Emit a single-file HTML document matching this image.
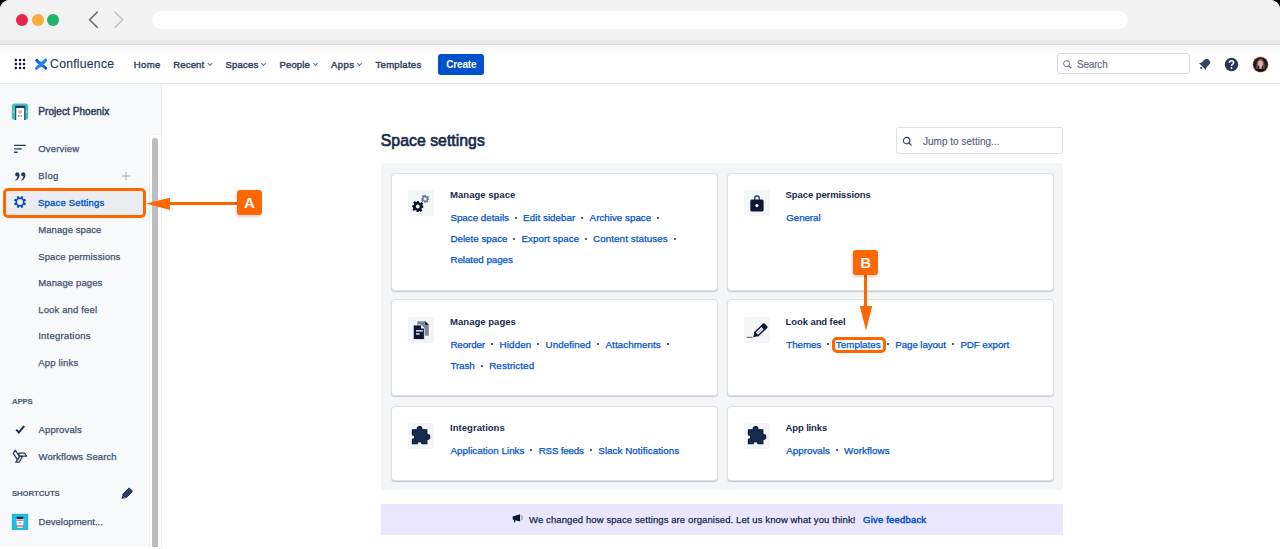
<!DOCTYPE html>
<html><head><meta charset="utf-8">
<style>
*{box-sizing:border-box;margin:0;padding:0}
html,body{width:1280px;height:549px;overflow:hidden;background:#000}
body{font-family:"Liberation Sans",sans-serif;color:#172b4d;position:relative}
.a{position:absolute;white-space:nowrap}
.tx{-webkit-text-stroke:0.25px currentColor}
#frame{position:absolute;left:0;top:0;width:1280px;height:549px;background:#fff;border-radius:9.5px 9.5px 0 0;overflow:hidden}
#chrome{position:absolute;left:0;top:0;width:1280px;height:40px;background:#f2f2f2}
.tl{position:absolute;top:14px;width:12px;height:12px;border-radius:50%}
#url{position:absolute;left:152px;top:11px;width:976px;height:18px;background:#fff;border-radius:9px}
#nav{position:absolute;left:0;top:45px;width:1280px;height:39px;background:#fff;border-bottom:1px solid #e4e6ea}
.nv{position:absolute;top:58px;font-size:10px;font-weight:700;color:#344563;line-height:12px}
#side{position:absolute;left:0;top:84px;width:162px;height:462.5px;background:#f8f9fb;border-right:1.2px solid #ebebeb}
.si{position:absolute;left:39px;font-size:10px;color:#344563;line-height:12px}
.cap{position:absolute;left:12px;font-size:7.5px;font-weight:700;color:#5e6c84;letter-spacing:.3px;line-height:10px}
#main{position:absolute;left:162px;top:84px;width:1118px;height:465px;background:#fff}
.card{position:absolute;background:#fff;border:1px solid #dfe1e6;border-radius:4px;box-shadow:0 1px 1px rgba(9,30,66,.2)}
.ib{position:absolute;width:27px;height:27px;background:#f4f5f7;border-radius:2px}
.ct{position:absolute;font-size:9.5px;font-weight:700;color:#172b4d;line-height:12px}
.lk{position:absolute;font-size:10px;color:#0052cc;line-height:12px}
.dot{position:absolute;width:2.2px;height:2.2px;background:#172b4d;border-radius:50%}
.or{background:#ff6600}
</style></head><body>
<div id="frame">
  <div id="chrome">
    <div class="tl" style="left:16px;background:#e8264a"></div>
    <div class="tl" style="left:32px;background:#f9ac3a"></div>
    <div class="tl" style="left:47px;background:#22b36b"></div>
    <svg class="a" style="left:80px;top:6px" width="50" height="28" viewBox="0 0 50 28">
      <path d="M17.3 6.1 L9.6 13.8 L17.3 21.4" fill="none" stroke="#707070" stroke-width="1.6" stroke-linecap="round"/>
      <path d="M35 6.1 L42.6 13.8 L35 21.4" fill="none" stroke="#c6c6c6" stroke-width="1.6" stroke-linecap="round"/>
    </svg>
    <div id="url"></div>
  </div>
  <div class="a" style="left:0;top:40px;width:1280px;height:4px;background:#eaeaea"></div>
  <div class="a" style="left:0;top:43.5px;width:1280px;height:2px;background:#dcdcdc"></div>
  <div id="nav"></div>
  <div class="a" style="left:0;top:45.5px;width:1280px;height:8px;background:linear-gradient(#f6f6f6,#fff)"></div>

<!-- grid -->
<svg class="a" style="left:13px;top:57px" width="14" height="14" viewBox="0 0 14 14">
  <g fill="#0b1636" transform="translate(0.15 0.15)">
  <rect x="1.5" y="1.6" width="2.4" height="2.4" rx="1"/><rect x="5.7" y="1.6" width="2.4" height="2.4" rx="1"/><rect x="9.7" y="1.6" width="2.4" height="2.4" rx="1"/>
  <rect x="1.5" y="5.6" width="2.4" height="2.4" rx="1"/><rect x="5.7" y="5.6" width="2.4" height="2.4" rx="1"/><rect x="9.7" y="5.6" width="2.4" height="2.4" rx="1"/>
  <rect x="1.5" y="9.6" width="2.4" height="2.4" rx="1"/><rect x="5.7" y="9.6" width="2.4" height="2.4" rx="1"/><rect x="9.7" y="9.6" width="2.4" height="2.4" rx="1"/>
  </g>
</svg>
<!-- confluence logo -->
<svg class="a" style="left:34px;top:57px" width="14" height="14" viewBox="0 0 14 14">
  <defs><linearGradient id="cg" x1="0" y1="0" x2="1" y2="1"><stop offset="0" stop-color="#0052cc"/><stop offset=".5" stop-color="#2684ff"/><stop offset="1" stop-color="#0052cc"/></linearGradient></defs>
  <path d="M2.7 3.4 Q7 9.4 11.6 3 M2.5 11.4 Q7 5.2 11.6 11.2" fill="none" stroke="url(#cg)" stroke-width="3" stroke-linecap="round"/>
</svg>
<!-- chevrons -->
<svg class="a" style="left:0;top:0" width="370" height="80">
  <g fill="none" stroke="#6b778c" stroke-width="1.05">
  <path d="M207.8 63.2 L210 65.4 L212.2 63.2"/>
  <path d="M261.3 63.2 L263.5 65.4 L265.7 63.2"/>
  <path d="M313.3 63.2 L315.5 65.4 L317.7 63.2"/>
  <path d="M357.3 63.2 L359.5 65.4 L361.7 63.2"/>
  </g>
</svg>
<!-- create button -->
<div class="a" style="left:438.3px;top:53.5px;width:45.6px;height:21px;background:#0052cc;border-radius:3px"></div>
<!-- search box -->
<div class="a" style="left:1056.5px;top:53.4px;width:133.2px;height:21px;border:1.3px solid #d8dbe1;border-radius:3px;background:#fff"></div>
<svg class="a" style="left:1061px;top:58px" width="12" height="12" viewBox="0 0 12 12">
  <circle cx="5.6" cy="5.6" r="3" fill="none" stroke="#5e6c84" stroke-width="1"/>
  <path d="M7.8 7.8 L10 10" stroke="#5e6c84" stroke-width="1.1" stroke-linecap="round"/>
</svg>
<!-- bell -->
<svg class="a" style="left:1198px;top:57px" width="14" height="14" viewBox="0 0 14 14">
  <g transform="rotate(45 7 7)">
  <path d="M2 10.6 Q3.6 9.4 3.6 7.2 V5.2 Q3.6 1.2 7 1.2 Q10.4 1.2 10.4 5.2 V7.2 Q10.4 9.4 12 10.6 Z" fill="#344563"/>
  <circle cx="7" cy="12.4" r="1.1" fill="#344563"/>
  </g>
</svg>
<!-- help -->
<svg class="a" style="left:1224px;top:56.5px" width="15" height="15" viewBox="0 0 15 15">
  <circle cx="7.5" cy="7.5" r="6.7" fill="#253858"/>
  <path d="M5.4 5.8 Q5.4 3.7 7.5 3.7 Q9.6 3.7 9.6 5.6 Q9.6 6.8 8.4 7.4 Q7.5 7.9 7.5 9" fill="none" stroke="#fff" stroke-width="1.5"/>
  <circle cx="7.5" cy="11" r=".9" fill="#fff"/>
</svg>
<!-- avatar -->
<svg class="a" style="left:1251.5px;top:55.5px" width="17" height="17" viewBox="0 0 17 17">
  <defs><clipPath id="av"><circle cx="8.5" cy="8.5" r="7.3"/></clipPath></defs>
  <circle cx="8.5" cy="8.5" r="8" fill="#ef8a4c"/>
  <circle cx="8.5" cy="8.5" r="7.3" fill="#141c30"/>
  <g clip-path="url(#av)">
    <path d="M4.2 14 Q3.8 3.2 8.5 2.8 Q13.2 3.2 12.8 14 L11.4 14 L11 8.5 L6 8.5 L5.6 14 Z" fill="#7a5646"/>
    <ellipse cx="8.5" cy="7.8" rx="2.4" ry="3.3" fill="#e4b09c"/>
    <rect x="7.4" y="10.4" width="2.2" height="2.6" fill="#e4b09c"/>
    <rect x="2" y="13" width="13" height="4" fill="#0d1220"/>
  </g>
</svg>


<div id="side"></div>
<!-- space icon -->
<svg class="a" style="left:11px;top:102px" width="19" height="19" viewBox="0 0 19 19">
  <rect x="0.8" y="1.4" width="16.4" height="16.6" rx="3.2" fill="#3fbfb8"/>
  <path d="M4.7 18 V4.8 Q4.7 4.2 5.3 4.2 H13.2 Q13.8 4.2 13.8 4.8 V18" fill="#fff" stroke="#1f2f63" stroke-width="1.1"/>
  <rect x="4.7" y="4.2" width="9.1" height="1.8" fill="#1f2f63"/>
  <circle cx="9.2" cy="9.9" r="1.9" fill="#f4a0a0"/>
  <circle cx="7.8" cy="13.9" r="0.8" fill="#ff2020"/>
  <circle cx="10.4" cy="13.9" r="0.8" fill="#23b5b0"/>
  <path d="M2.8 8.5 Q2.2 9.5 2.8 10.6 M15.2 8.5 Q15.8 9.5 15.2 10.6" stroke="#d9f3f1" stroke-width="0.8" fill="none"/>
</svg>
<!-- overview icon -->
<svg class="a" style="left:13px;top:144px" width="14" height="10" viewBox="0 0 14 10">
  <rect x="0.9" y="0.8" width="12" height="1.3" rx=".6" fill="#253858"/>
  <rect x="0.9" y="4.3" width="8.1" height="1.3" rx=".6" fill="#253858"/>
  <rect x="0.9" y="7.6" width="3.9" height="1.3" rx=".6" fill="#253858"/>
</svg>
<!-- blog 99 -->
<svg class="a" style="left:14px;top:171px" width="13" height="11" viewBox="0 0 13 11">
  <circle cx="3.3" cy="3.4" r="2.1" fill="#253858"/>
  <path d="M5.5 3.4 Q5.9 7.6 1.6 9.8 L1.2 9.2 Q3.6 7.4 3.6 5.2 Z" fill="#253858"/>
  <circle cx="9.2" cy="3.4" r="2.1" fill="#253858"/>
  <path d="M11.4 3.4 Q11.8 7.6 7.5 9.8 L7.1 9.2 Q9.5 7.4 9.5 5.2 Z" fill="#253858"/>
</svg>
<!-- plus -->
<svg class="a" style="left:121px;top:171px" width="10" height="10" viewBox="0 0 10 10">
  <path d="M5 0.9 V9.1 M0.9 5 H9.1" stroke="#a5adba" stroke-width="1"/>
</svg>
<!-- scrollbar -->
<div class="a" style="left:149px;top:134px;width:12px;height:412.5px;background:#fff;border-left:1.6px solid #ececec;border-top:1px solid #f2f2f2"></div>
<div class="a" style="left:152px;top:137.5px;width:5.8px;height:409px;background:#bdbdbd;border-radius:2.9px 2.9px 0 0"></div>
<!-- highlight box -->
<div class="a" style="left:3px;top:188px;width:143px;height:30px;border:3px solid #ff6600;border-radius:5px;background:#ebecf0"></div>
<!-- gear -->
<svg class="a" style="left:13px;top:195px" width="14" height="14" viewBox="0 0 14 14">
  <path d="M7.68 2.45 L8.40 0.96 L10.28 1.74 L9.73 3.30 L10.70 4.27 L12.26 3.72 L13.04 5.60 L11.55 6.32 L11.55 7.68 L13.04 8.40 L12.26 10.28 L10.70 9.73 L9.73 10.70 L10.28 12.26 L8.40 13.04 L7.68 11.55 L6.32 11.55 L5.60 13.04 L3.72 12.26 L4.27 10.70 L3.30 9.73 L1.74 10.28 L0.96 8.40 L2.45 7.68 L2.45 6.32 L0.96 5.60 L1.74 3.72 L3.30 4.27 L4.27 3.30 L3.72 1.74 L5.60 0.96 L6.32 2.45 Z" fill="#0747c6"/>
  <circle cx="7" cy="7" r="3" fill="#ebecf0"/>
</svg>
<!-- arrow A -->
<div class="a or" style="left:168px;top:202px;width:70px;height:3px"></div>
<svg class="a" style="left:146px;top:196px" width="26" height="16" viewBox="0 0 26 16">
  <path d="M0.2 7.5 L23.9 1.8 L23.9 14 Z" fill="#ff6600"/>
</svg>
<div class="a or" style="left:237px;top:190px;width:25px;height:25px;border-radius:3px;box-shadow:-1px 2px 3px rgba(0,0,0,.18)"></div>
<div class="a" style="left:237px;top:190px;width:25px;height:25px;color:#fff;font-weight:700;font-size:15px;line-height:25px;text-align:center">A</div>
<!-- check -->
<svg class="a" style="left:14px;top:424px" width="12" height="10" viewBox="0 0 12 10">
  <path d="M2.2 5.6 L4.8 8.5 L10.2 2" fill="none" stroke="#253858" stroke-width="2"/>
</svg>
<!-- workflows -->
<svg class="a" style="left:12px;top:449px" width="16" height="15" viewBox="0 0 16 15">
  <g fill="none" stroke="#253858" stroke-width="1.2" stroke-linejoin="round">
  <path d="M3.4 1.2 L1.3 4.4 L5.6 10.8 L7.4 7.6 Z"/>
  <path d="M6.6 4.2 L12.6 4.2 L14.6 7.2 L7.6 7.2 Z"/>
  <path d="M7.6 7.4 L10.6 7.4 L7.2 13.2 L3.8 13.2 Z"/>
  </g>
</svg>
<!-- pencil shortcuts -->
<svg class="a" style="left:120px;top:487px" width="14" height="14" viewBox="0 0 14 14">
  <g transform="translate(1.6 11.8) rotate(-45)">
    <path d="M0 0 L3 -2.2 L3 2.2 Z" fill="#172b4d"/>
    <rect x="3.7" y="-2.5" width="9.4" height="5" rx="0.9" fill="#2f4066" stroke="#172b4d" stroke-width=".9"/>
  </g>
</svg>
<!-- dev icon -->
<svg class="a" style="left:11px;top:513px" width="18" height="18" viewBox="0 0 18 18">
  <rect x="0.8" y="0.8" width="16.4" height="16.2" fill="#1fbce0"/>
  <path d="M5.2 5.6 L12.8 5.6 L11.8 14.8 H6.2 Z" fill="#fff"/>
  <rect x="5.4" y="3.8" width="7.2" height="2.2" rx="1" fill="#1f2f63"/>
  <rect x="5.5" y="6.6" width="7" height="1.1" fill="#ff3030"/>
  <rect x="6" y="12.4" width="6" height="1.2" fill="#ff3030"/>
  <circle cx="9" cy="10" r="1" fill="#1fbce0"/>
</svg>


<!-- jump input -->
<div class="a" style="left:896.2px;top:127.3px;width:166.6px;height:26.7px;border:1px solid #dfe1e6;border-radius:2px;background:#fff"></div>
<svg class="a" style="left:901px;top:135px" width="12" height="12" viewBox="0 0 12 12">
  <circle cx="5.6" cy="5.6" r="3.2" fill="none" stroke="#344563" stroke-width="1.15"/>
  <path d="M7.9 7.9 L10.2 10.2" stroke="#344563" stroke-width="1.2" stroke-linecap="round"/>
</svg>
<!-- container -->
<div class="a" style="left:381px;top:162.8px;width:682px;height:327.7px;background:#f4f5f7;border-radius:3.5px"></div>
<div class="card" style="left:391px;top:172.5px;width:327px;height:118.5px"></div>
<div class="ib" style="left:408px;top:189.8px;width:26px;height:26px"></div>
<svg class="a" style="left:408px;top:189.8px" width="26" height="26" viewBox="0 0 26 26"><g transform="translate(9.8 16.5)"><path d="M-1.1 -5.6 H1.1 L1.4 -4.1 L2.6 -3.6 L3.9 -4.5 L5.4 -3 L4.5 -1.7 L5 -0.5 L5.6 -0.2 V1.1 L4.1 1.4 L3.6 2.6 L4.5 3.9 L3 5.4 L1.7 4.5 L0.5 5 L1.1 5.6 H-1.1 L-1.4 4.1 L-2.6 3.6 L-3.9 4.5 L-5.4 3 L-4.5 1.7 L-5 0.5 L-5.6 1.1 V-1.1 L-4.1 -1.4 L-3.6 -2.6 L-4.5 -3.9 L-3 -5.4 L-1.7 -4.5 L-0.5 -5 Z" fill="#0b1636"/><circle r="1.9" fill="#f4f5f7"/></g>
<g transform="translate(17.1 8.9)"><path d="M-0.8 -3.9 H0.8 L1 -2.9 L1.8 -2.5 L2.7 -3.2 L3.8 -2.1 L3.2 -1.2 L3.5 -0.4 L3.9 -0.1 V0.8 L2.9 1 L2.5 1.8 L3.2 2.7 L2.1 3.8 L1.2 3.2 L0.4 3.5 L0.8 3.9 H-0.8 L-1 2.9 L-1.8 2.5 L-2.7 3.2 L-3.8 2.1 L-3.2 1.2 L-3.5 0.4 L-3.9 0.8 V-0.8 L-2.9 -1 L-2.5 -1.8 L-3.2 -2.7 L-2.1 -3.8 L-1.2 -3.2 L-0.4 -3.5 Z" fill="#6b778c"/><circle r="1.6" fill="#f4f5f7"/></g></svg>
<div class="card" style="left:726.5px;top:172.5px;width:327px;height:118.5px"></div>
<div class="ib" style="left:743.5px;top:189.8px;width:26px;height:26px"></div>
<svg class="a" style="left:743.5px;top:189.8px" width="26" height="26" viewBox="0 0 26 26"><path d="M10.8 9.8 V8 Q10.8 5.8 13 5.8 Q15.2 5.8 15.2 8 V9.8" fill="none" stroke="#172b4d" stroke-width="1.25"/>
<rect x="6.3" y="9.5" width="13.3" height="12.1" rx="1.6" fill="#0b1636"/><circle cx="12.95" cy="15.6" r="1.6" fill="#fff"/></svg>
<div class="card" style="left:391px;top:299.2px;width:327px;height:97.3px"></div>
<div class="ib" style="left:408px;top:316.5px;width:26px;height:26px"></div>
<svg class="a" style="left:408px;top:316.5px" width="26" height="26" viewBox="0 0 26 26"><path d="M9.3 4.2 H17.2 L20.8 7.8 V18.8 H9.3 Z" fill="#7a869a"/><path d="M17.2 4.2 L20.8 7.8 H17.2 Z" fill="#0b1636"/>
<path d="M5.3 8 H13 L16.4 11.4 V22.5 H5.3 Z" fill="#0b1636" stroke="#f4f5f7" stroke-width=".8"/><path d="M13 8 L16.4 11.4 H13 Z" fill="#fff"/>
<rect x="8" y="13.2" width="6.9" height="1.3" fill="#fff"/><rect x="8" y="16.3" width="3.6" height="1.3" fill="#fff"/></svg>
<div class="card" style="left:726.5px;top:299.2px;width:327px;height:97.3px"></div>
<div class="ib" style="left:743.5px;top:316.5px;width:26px;height:26px"></div>
<svg class="a" style="left:743.5px;top:316.5px" width="26" height="26" viewBox="0 0 26 26"><path d="M2.7 20.4 H8.6" stroke="#6b778c" stroke-width="1.2"/>
<g transform="translate(9.2 20.2) rotate(-44)">
<path d="M0 0 L4.8 -3 L4.8 3 Z" fill="#0b1636"/>
<rect x="4.4" y="-2.3" width="9.4" height="4.6" fill="#fff" stroke="#0b1636" stroke-width="1.5"/>
<path d="M5.6 0 H13" stroke="#8993a4" stroke-width=".9"/>
<rect x="13.2" y="-3.1" width="4.4" height="6.2" rx="1.2" fill="#0b1636"/>
</g></svg>
<div class="card" style="left:391px;top:405.8px;width:327px;height:75.2px"></div>
<div class="ib" style="left:408px;top:423.1px;width:26px;height:26px"></div>
<svg class="a" style="left:408px;top:423.1px" width="26" height="26" viewBox="0 0 26 26"><path d="M4.4 6.7 H9.3 Q8.8 3.6 11.6 3.6 Q14.4 3.6 13.9 6.7 H18.9 V11.6 Q21.8 11.2 21.8 13.9 Q21.8 16.6 18.9 16.2 V20.7 H13.9 Q14.2 18.6 11.6 18.6 Q9 18.6 9.3 20.7 H4.4 V16.2 Q6.6 16.4 6.6 14.1 Q6.6 11.8 4.4 12 Z" fill="#172b4d" stroke="#0b1636" stroke-width="1.1" stroke-linejoin="round"/></svg>
<div class="card" style="left:726.5px;top:405.8px;width:327px;height:75.2px"></div>
<div class="ib" style="left:743.5px;top:423.1px;width:26px;height:26px"></div>
<svg class="a" style="left:743.5px;top:423.1px" width="26" height="26" viewBox="0 0 26 26"><path d="M4.4 6.7 H9.3 Q8.8 3.6 11.6 3.6 Q14.4 3.6 13.9 6.7 H18.9 V11.6 Q21.8 11.2 21.8 13.9 Q21.8 16.6 18.9 16.2 V20.7 H13.9 Q14.2 18.6 11.6 18.6 Q9 18.6 9.3 20.7 H4.4 V16.2 Q6.6 16.4 6.6 14.1 Q6.6 11.8 4.4 12 Z" fill="#172b4d" stroke="#0b1636" stroke-width="1.1" stroke-linejoin="round"/></svg>
<div class="dot" style="left:514.7px;top:216.5px"></div>
<div class="dot" style="left:580.8px;top:216.5px"></div>
<div class="dot" style="left:656.6px;top:216.5px"></div>
<div class="dot" style="left:513.0px;top:237.9px"></div>
<div class="dot" style="left:585.0px;top:237.9px"></div>
<div class="dot" style="left:673.6px;top:237.9px"></div>
<div class="dot" style="left:490.8px;top:343.2px"></div>
<div class="dot" style="left:537.2px;top:343.2px"></div>
<div class="dot" style="left:596.8px;top:343.2px"></div>
<div class="dot" style="left:666.7px;top:343.2px"></div>
<div class="dot" style="left:480.8px;top:364.6px"></div>
<div class="dot" style="left:827.0px;top:343.2px"></div>
<div class="dot" style="left:886.9px;top:343.2px"></div>
<div class="dot" style="left:951.6px;top:343.2px"></div>
<div class="dot" style="left:530.0px;top:449.0px"></div>
<div class="dot" style="left:589.5px;top:449.0px"></div>
<div class="dot" style="left:835.6px;top:449.0px"></div>
<!-- banner -->
<div class="a" style="left:380.8px;top:503.7px;width:682.2px;height:31.5px;background:#eae6ff"></div>
<svg class="a" style="left:510px;top:512px" width="16" height="12" viewBox="0 0 16 12">
  <path d="M2.7 4.4 L10.1 2.3 V9.4 L2.7 7.6 Z" fill="#0b1636"/>
  <path d="M3.9 7.7 L5.7 8.1 L5.1 10.5 L4.2 10.5 Z" fill="#0b1636"/>
  <path d="M11.7 3.6 Q12.7 5.8 11.7 8.2" stroke="#8993a4" stroke-width="1" fill="none"/>
</svg>
<!-- marker B -->
<div class="a or" style="left:864.1px;top:274px;width:3px;height:34px"></div>
<svg class="a" style="left:858px;top:305px" width="16" height="27" viewBox="0 0 16 27">
  <path d="M1.8 1 H14.2 L8 25.6 Z" fill="#ff6600"/>
</svg>
<div class="a or" style="left:853.3px;top:250.2px;width:24.6px;height:24.6px;border-radius:3px;box-shadow:-1px 2px 3px rgba(0,0,0,.18)"></div>
<div class="a" style="left:853.3px;top:250.2px;width:24.6px;height:24.6px;color:#fff;font-weight:700;font-size:15px;line-height:25px;text-align:center">B</div>
<!-- templates highlight -->
<div class="a" style="left:832px;top:336.8px;width:53.8px;height:15.9px;border:3.1px solid #ff6600;border-radius:5px"></div>

<div class="a" style="-webkit-text-stroke:0.15px currentColor;left:50.09px;top:58.22px;font-size:12.2px;line-height:12.2px;font-weight:400;color:#253858;letter-spacing:0.255px;">Confluence</div>
<div class="a" style="-webkit-text-stroke:0.45px currentColor;left:133.72px;top:60.21px;font-size:9.5px;line-height:9.5px;font-weight:400;color:#344563;letter-spacing:0.402px;">Home</div>
<div class="a" style="-webkit-text-stroke:0.45px currentColor;left:173.33px;top:60.21px;font-size:9.5px;line-height:9.5px;font-weight:400;color:#344563;letter-spacing:0.140px;">Recent</div>
<div class="a" style="-webkit-text-stroke:0.45px currentColor;left:225.53px;top:60.21px;font-size:9.5px;line-height:9.5px;font-weight:400;color:#344563;letter-spacing:0.210px;">Spaces</div>
<div class="a" style="-webkit-text-stroke:0.45px currentColor;left:279.52px;top:60.21px;font-size:9.5px;line-height:9.5px;font-weight:400;color:#344563;letter-spacing:0.143px;">People</div>
<div class="a" style="-webkit-text-stroke:0.45px currentColor;left:330.92px;top:60.21px;font-size:9.5px;line-height:9.5px;font-weight:400;color:#344563;letter-spacing:0.448px;">Apps</div>
<div class="a" style="-webkit-text-stroke:0.45px currentColor;left:375.52px;top:60.21px;font-size:9.5px;line-height:9.5px;font-weight:400;color:#344563;letter-spacing:0.293px;">Templates</div>
<div class="a" style="left:446.30px;top:59.98px;font-size:10px;line-height:10px;font-weight:700;color:#ffffff;letter-spacing:-0.190px;">Create</div>
<div class="a" style="-webkit-text-stroke:0.15px currentColor;left:1077.00px;top:59.98px;font-size:10px;line-height:10px;font-weight:400;color:#5e6c84;letter-spacing:-0.198px;">Search</div>
<div class="a" style="-webkit-text-stroke:0.5px currentColor;left:38.30px;top:107.19px;font-size:10px;line-height:10px;font-weight:400;color:#344563;letter-spacing:0.064px;">Project Phoenix</div>
<div class="a" style="-webkit-text-stroke:0.25px currentColor;left:38.32px;top:144.01px;font-size:9.5px;line-height:9.5px;font-weight:400;color:#42526e;letter-spacing:0.170px;">Overview</div>
<div class="a" style="-webkit-text-stroke:0.25px currentColor;left:38.32px;top:171.01px;font-size:9.5px;line-height:9.5px;font-weight:400;color:#42526e;letter-spacing:0.359px;">Blog</div>
<div class="a" style="-webkit-text-stroke:0.35px currentColor;left:38.12px;top:197.71px;font-size:9.5px;line-height:9.5px;font-weight:400;color:#0052cc;letter-spacing:0.175px;">Space Settings</div>
<div class="a" style="-webkit-text-stroke:0.25px currentColor;left:38.23px;top:225.01px;font-size:9.5px;line-height:9.5px;font-weight:400;color:#42526e;letter-spacing:0.077px;">Manage space</div>
<div class="a" style="-webkit-text-stroke:0.25px currentColor;left:38.23px;top:251.56px;font-size:9.5px;line-height:9.5px;font-weight:400;color:#42526e;letter-spacing:0.117px;">Space permissions</div>
<div class="a" style="-webkit-text-stroke:0.25px currentColor;left:38.23px;top:278.11px;font-size:9.5px;line-height:9.5px;font-weight:400;color:#42526e;letter-spacing:0.116px;">Manage pages</div>
<div class="a" style="-webkit-text-stroke:0.25px currentColor;left:38.23px;top:304.66px;font-size:9.5px;line-height:9.5px;font-weight:400;color:#42526e;letter-spacing:0.146px;">Look and feel</div>
<div class="a" style="-webkit-text-stroke:0.25px currentColor;left:38.23px;top:331.21px;font-size:9.5px;line-height:9.5px;font-weight:400;color:#42526e;letter-spacing:0.233px;">Integrations</div>
<div class="a" style="-webkit-text-stroke:0.25px currentColor;left:38.23px;top:357.76px;font-size:9.5px;line-height:9.5px;font-weight:400;color:#42526e;letter-spacing:0.188px;">App links</div>
<div class="a" style="-webkit-text-stroke:0.1px currentColor;left:11.91px;top:397.65px;font-size:7.8px;line-height:7.8px;font-weight:700;color:#505f79;letter-spacing:-0.114px;">APPS</div>
<div class="a" style="-webkit-text-stroke:0.25px currentColor;left:38.52px;top:425.41px;font-size:9.5px;line-height:9.5px;font-weight:400;color:#42526e;letter-spacing:0.133px;">Approvals</div>
<div class="a" style="-webkit-text-stroke:0.25px currentColor;left:38.52px;top:452.41px;font-size:9.5px;line-height:9.5px;font-weight:400;color:#42526e;letter-spacing:0.116px;">Workflows Search</div>
<div class="a" style="-webkit-text-stroke:0.1px currentColor;left:11.91px;top:490.45px;font-size:7.8px;line-height:7.8px;font-weight:700;color:#505f79;letter-spacing:-0.082px;">SHORTCUTS</div>
<div class="a" style="-webkit-text-stroke:0.25px currentColor;left:38.52px;top:517.41px;font-size:9.5px;line-height:9.5px;font-weight:400;color:#42526e;letter-spacing:0.039px;">Development...</div>
<div class="a" style="-webkit-text-stroke:0.65px currentColor;left:380.81px;top:132.68px;font-size:15.8px;line-height:15.8px;font-weight:400;color:#172b4d;letter-spacing:0.032px;">Space settings</div>
<div class="a" style="-webkit-text-stroke:0.12px currentColor;left:923.00px;top:136.98px;font-size:10px;line-height:10px;font-weight:400;color:#505f79;letter-spacing:0.019px;">Jump to setting...</div>
<div class="a" style="left:450.12px;top:189.71px;font-size:9.5px;line-height:9.5px;font-weight:700;color:#172b4d;letter-spacing:0.016px;">Manage space</div>
<div class="a" style="-webkit-text-stroke:0.25px currentColor;left:450.41px;top:212.65px;font-size:9.8px;line-height:9.8px;font-weight:400;color:#0052cc;letter-spacing:-0.019px;">Space details</div>
<div class="a" style="-webkit-text-stroke:0.25px currentColor;left:523.11px;top:212.65px;font-size:9.8px;line-height:9.8px;font-weight:400;color:#0052cc;letter-spacing:0.044px;">Edit sidebar</div>
<div class="a" style="-webkit-text-stroke:0.25px currentColor;left:589.61px;top:212.65px;font-size:9.8px;line-height:9.8px;font-weight:400;color:#0052cc;letter-spacing:0.003px;">Archive space</div>
<div class="a" style="-webkit-text-stroke:0.25px currentColor;left:450.41px;top:233.80px;font-size:9.8px;line-height:9.8px;font-weight:400;color:#0052cc;letter-spacing:-0.009px;">Delete space</div>
<div class="a" style="-webkit-text-stroke:0.25px currentColor;left:521.41px;top:233.80px;font-size:9.8px;line-height:9.8px;font-weight:400;color:#0052cc;letter-spacing:0.049px;">Export space</div>
<div class="a" style="-webkit-text-stroke:0.25px currentColor;left:593.11px;top:233.80px;font-size:9.8px;line-height:9.8px;font-weight:400;color:#0052cc;letter-spacing:0.072px;">Content statuses</div>
<div class="a" style="-webkit-text-stroke:0.25px currentColor;left:450.41px;top:254.95px;font-size:9.8px;line-height:9.8px;font-weight:400;color:#0052cc;letter-spacing:-0.062px;">Related pages</div>
<div class="a" style="left:785.62px;top:189.71px;font-size:9.5px;line-height:9.5px;font-weight:700;color:#172b4d;letter-spacing:-0.092px;">Space permissions</div>
<div class="a" style="-webkit-text-stroke:0.25px currentColor;left:786.31px;top:212.65px;font-size:9.8px;line-height:9.8px;font-weight:400;color:#0052cc;letter-spacing:-0.097px;">General</div>
<div class="a" style="left:450.12px;top:316.71px;font-size:9.5px;line-height:9.5px;font-weight:700;color:#172b4d;letter-spacing:0.023px;">Manage pages</div>
<div class="a" style="-webkit-text-stroke:0.25px currentColor;left:450.41px;top:339.65px;font-size:9.8px;line-height:9.8px;font-weight:400;color:#0052cc;letter-spacing:-0.118px;">Reorder</div>
<div class="a" style="-webkit-text-stroke:0.25px currentColor;left:499.61px;top:339.65px;font-size:9.8px;line-height:9.8px;font-weight:400;color:#0052cc;letter-spacing:0.122px;">Hidden</div>
<div class="a" style="-webkit-text-stroke:0.25px currentColor;left:545.61px;top:339.65px;font-size:9.8px;line-height:9.8px;font-weight:400;color:#0052cc;letter-spacing:0.068px;">Undefined</div>
<div class="a" style="-webkit-text-stroke:0.25px currentColor;left:605.51px;top:339.65px;font-size:9.8px;line-height:9.8px;font-weight:400;color:#0052cc;letter-spacing:0.075px;">Attachments</div>
<div class="a" style="-webkit-text-stroke:0.25px currentColor;left:450.41px;top:360.80px;font-size:9.8px;line-height:9.8px;font-weight:400;color:#0052cc;letter-spacing:-0.102px;">Trash</div>
<div class="a" style="-webkit-text-stroke:0.25px currentColor;left:489.21px;top:360.80px;font-size:9.8px;line-height:9.8px;font-weight:400;color:#0052cc;letter-spacing:0.087px;">Restricted</div>
<div class="a" style="left:785.62px;top:316.71px;font-size:9.5px;line-height:9.5px;font-weight:700;color:#172b4d;letter-spacing:-0.099px;">Look and feel</div>
<div class="a" style="-webkit-text-stroke:0.25px currentColor;left:786.31px;top:339.65px;font-size:9.8px;line-height:9.8px;font-weight:400;color:#0052cc;letter-spacing:-0.085px;">Themes</div>
<div class="a" style="-webkit-text-stroke:0.25px currentColor;left:835.81px;top:339.65px;font-size:9.8px;line-height:9.8px;font-weight:400;color:#0052cc;letter-spacing:0.036px;">Templates</div>
<div class="a" style="-webkit-text-stroke:0.25px currentColor;left:895.31px;top:339.65px;font-size:9.8px;line-height:9.8px;font-weight:400;color:#0052cc;letter-spacing:-0.115px;">Page layout</div>
<div class="a" style="-webkit-text-stroke:0.25px currentColor;left:960.41px;top:339.65px;font-size:9.8px;line-height:9.8px;font-weight:400;color:#0052cc;letter-spacing:-0.087px;">PDF export</div>
<div class="a" style="left:450.12px;top:422.71px;font-size:9.5px;line-height:9.5px;font-weight:700;color:#172b4d;letter-spacing:0.023px;">Integrations</div>
<div class="a" style="-webkit-text-stroke:0.25px currentColor;left:450.41px;top:445.65px;font-size:9.8px;line-height:9.8px;font-weight:400;color:#0052cc;letter-spacing:0.032px;">Application Links</div>
<div class="a" style="-webkit-text-stroke:0.25px currentColor;left:538.71px;top:445.65px;font-size:9.8px;line-height:9.8px;font-weight:400;color:#0052cc;letter-spacing:-0.207px;">RSS feeds</div>
<div class="a" style="-webkit-text-stroke:0.25px currentColor;left:598.31px;top:445.65px;font-size:9.8px;line-height:9.8px;font-weight:400;color:#0052cc;letter-spacing:0.044px;">Slack Notifications</div>
<div class="a" style="left:785.62px;top:422.71px;font-size:9.5px;line-height:9.5px;font-weight:700;color:#172b4d;letter-spacing:-0.146px;">App links</div>
<div class="a" style="-webkit-text-stroke:0.25px currentColor;left:786.31px;top:445.65px;font-size:9.8px;line-height:9.8px;font-weight:400;color:#0052cc;letter-spacing:-0.011px;">Approvals</div>
<div class="a" style="-webkit-text-stroke:0.25px currentColor;left:844.11px;top:445.65px;font-size:9.8px;line-height:9.8px;font-weight:400;color:#0052cc;letter-spacing:0.064px;">Workflows</div>
<div class="a" style="-webkit-text-stroke:0.25px currentColor;left:529.02px;top:515.01px;font-size:9.5px;line-height:9.5px;font-weight:400;color:#172b4d;letter-spacing:0.099px;">We changed how space settings are organised. Let us know what you think!</div>
<div class="a" style="-webkit-text-stroke:0.45px currentColor;left:863.12px;top:515.01px;font-size:9.5px;line-height:9.5px;font-weight:400;color:#0052cc;letter-spacing:0.186px;">Give feedback</div>
</div>
</body></html>
